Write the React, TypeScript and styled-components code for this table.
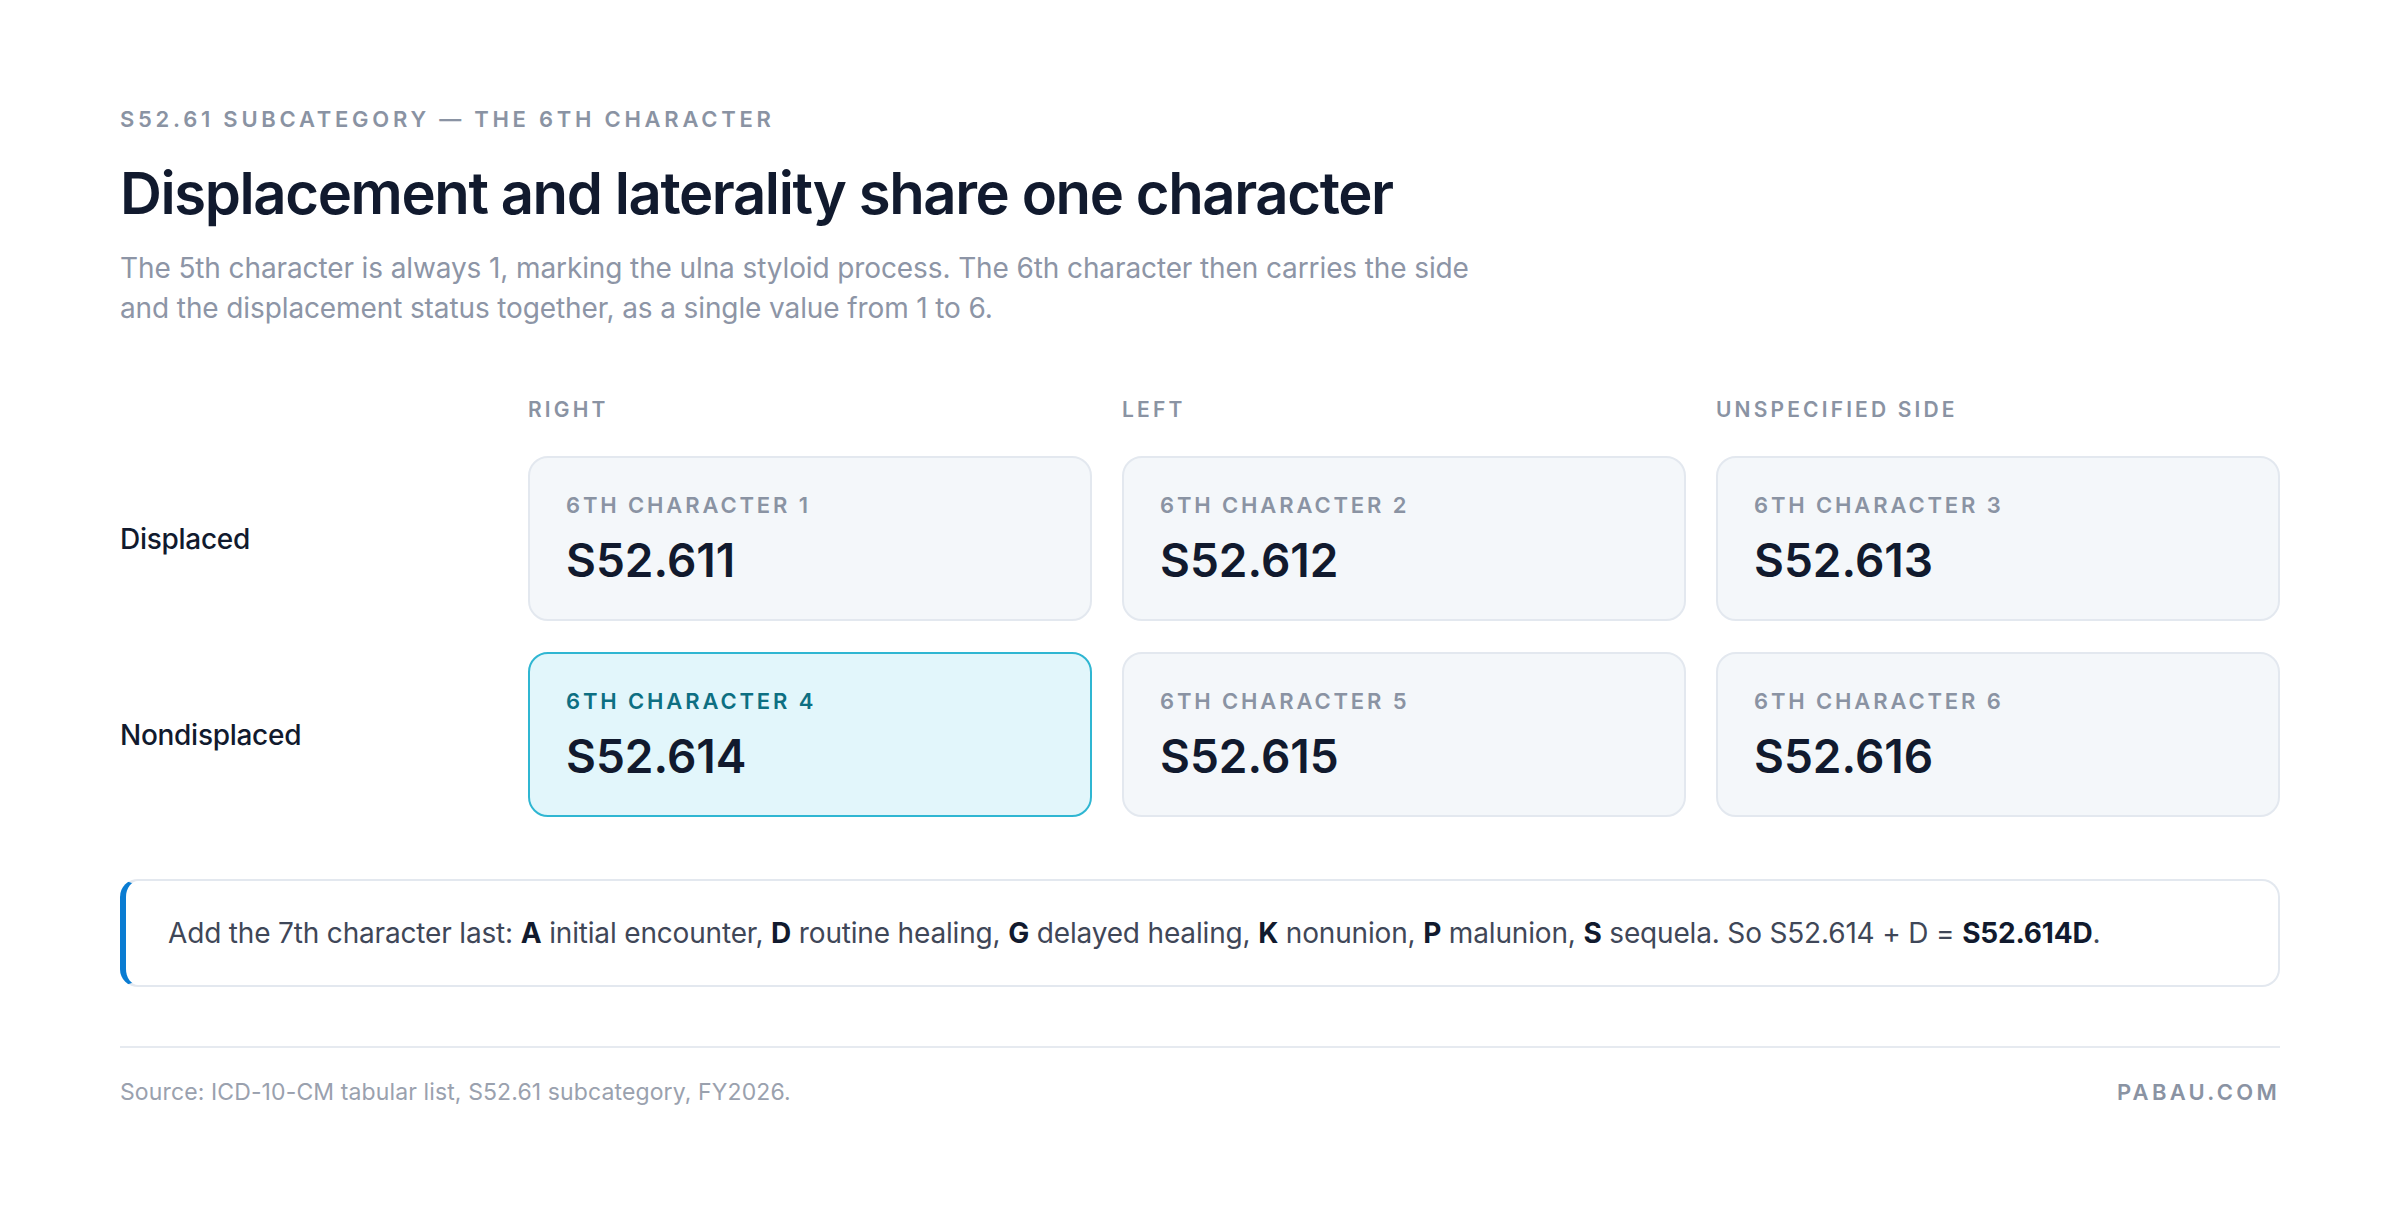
import React from "react";
import styled, { createGlobalStyle } from "styled-components";

const Global = createGlobalStyle`
  html, body { margin: 0; padding: 0; background: #ffffff; }
  body { font-family: Inter, "Noto Sans", sans-serif; -webkit-font-smoothing: antialiased; }
  * { box-sizing: border-box; }
`;

const Page = styled.main`
  width: 2400px;
  padding: 106px 120px 0 120px;
  display: flex;
  flex-direction: column;
`;

const Eyebrow = styled.div`
  font-size: 22px;
  line-height: 26px;
  font-weight: 600;
  letter-spacing: 0.17em;
  color: #8a93a3;
  text-transform: uppercase;
`;

const Title = styled.h1`
  margin: 30px 0 0 0;
  font-size: 58px;
  line-height: 62px;
  font-weight: 600;
  letter-spacing: -0.024em;
  color: #111a2e;
`;

const Lede = styled.p`
  margin: 24px 0 0 0;
  max-width: 1390px;
  font-size: 28px;
  line-height: 40px;
  font-weight: 400;
  letter-spacing: -0.004em;
  color: #8d95a6;
`;

const Matrix = styled.section`
  margin-top: 70px;
  display: grid;
  grid-template-columns: 378px repeat(3, 1fr);
  column-gap: 30px;
  row-gap: 31px;
  align-items: center;
`;

const ColHead = styled.div`
  font-size: 21px;
  line-height: 24px;
  font-weight: 600;
  letter-spacing: 0.15em;
  color: #8a93a3;
  text-transform: uppercase;
  margin-bottom: 3px;
`;

const RowLabel = styled.div`
  font-size: 28px;
  line-height: 34px;
  font-weight: 500;
  color: #111a2e;
  letter-spacing: -0.01em;
`;

const Card = styled.div<{ $active?: boolean }>`
  height: 165px;
  border-radius: 20px;
  border: ${(p) => (p.$active ? "2px solid #2fb6d2" : "2px solid #e3e8ef")};
  background: ${(p) => (p.$active ? "#e2f6fb" : "#f4f7fa")};
  padding: 34px 36px 0 36px;
  display: flex;
  flex-direction: column;
  gap: 16px;
`;

const CardLabel = styled.div<{ $active?: boolean }>`
  font-size: 22px;
  line-height: 26px;
  font-weight: 600;
  letter-spacing: 0.13em;
  text-transform: uppercase;
  color: ${(p) => (p.$active ? "#0d6f82" : "#8a93a3")};
`;

const Code = styled.div`
  font-size: 46px;
  line-height: 52px;
  font-weight: 600;
  letter-spacing: 0;
  color: #111a2e;
`;

const Callout = styled.aside`
  margin-top: 62px;
  height: 108px;
  border: 2px solid #e3e8ef;
  border-left: 6px solid #0a7cd2;
  border-radius: 18px;
  display: flex;
  align-items: center;
  padding-left: 42px;
  font-size: 28px;
  line-height: 36px;
  color: #3f4758;
  letter-spacing: -0.006em;
`;

const Strong = styled.b`
  font-weight: 700;
  color: #111a2e;
`;

const Divider = styled.hr`
  margin: 59px 0 0 0;
  border: none;
  border-top: 2px solid #e6eaf0;
`;

const Footer = styled.footer`
  padding-top: 30px;
  display: flex;
  justify-content: space-between;
  align-items: center;
`;

const Source = styled.div`
  font-size: 23px;
  line-height: 28px;
  color: #9aa1ae;
  letter-spacing: 0.005em;
`;

const Brand = styled.div`
  font-size: 22px;
  line-height: 28px;
  font-weight: 600;
  letter-spacing: 0.15em;
  color: #8a93a3;
`;

const cols = ["Right", "Left", "Unspecified side"];
const rows = [
  { label: "Displaced", codes: ["1", "2", "3"] },
  { label: "Nondisplaced", codes: ["4", "5", "6"] },
];

export default function App() {
  return (
    <>
      <Global />
      <Page>
        <Eyebrow>S52.61 Subcategory — The 6th character</Eyebrow>
        <Title>Displacement and laterality share one character</Title>
        <Lede>
          The 5th character is always 1, marking the ulna styloid process. The 6th character then carries the side
          and the displacement status together, as a single value from 1 to 6.
        </Lede>
        <Matrix>
          <div />
          {cols.map((c) => (
            <ColHead key={c}>{c}</ColHead>
          ))}
          {rows.map((r) => (
            <React.Fragment key={r.label}>
              <RowLabel>{r.label}</RowLabel>
              {r.codes.map((n) => {
                const active = n === "4";
                return (
                  <Card key={n} $active={active}>
                    <CardLabel $active={active}>6th character {n}</CardLabel>
                    <Code>S52.61{n}</Code>
                  </Card>
                );
              })}
            </React.Fragment>
          ))}
        </Matrix>
        <Callout>
          <span>
            Add the 7th character last: <Strong>A</Strong> initial encounter, <Strong>D</Strong> routine healing,{" "}
            <Strong>G</Strong> delayed healing, <Strong>K</Strong> nonunion, <Strong>P</Strong> malunion,{" "}
            <Strong>S</Strong> sequela. So S52.614 + D = <Strong>S52.614D</Strong>.
          </span>
        </Callout>
        <Divider />
        <Footer>
          <Source>Source: ICD-10-CM tabular list, S52.61 subcategory, FY2026.</Source>
          <Brand>PABAU.COM</Brand>
        </Footer>
      </Page>
    </>
  );
}
